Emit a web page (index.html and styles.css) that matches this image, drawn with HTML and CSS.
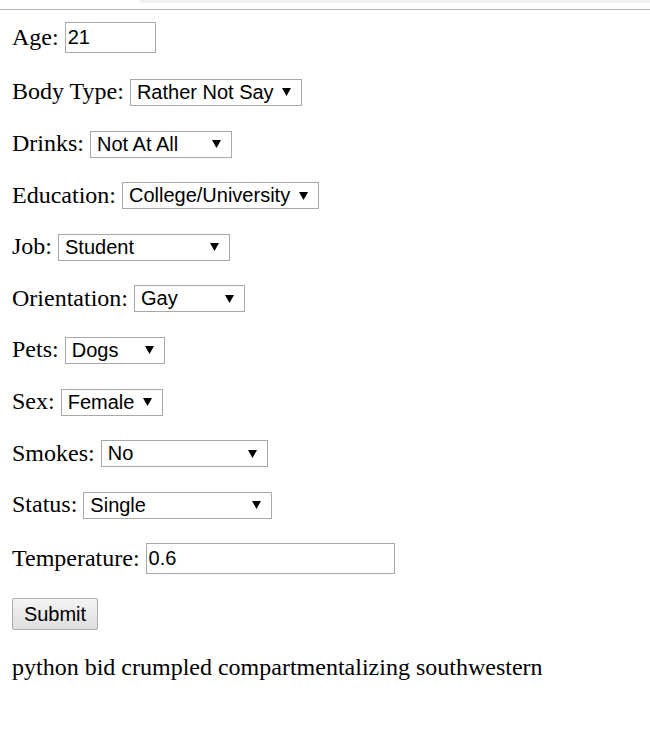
FILE: index.html
```html
<!DOCTYPE html>
<html lang="en">
<head>
<meta charset="utf-8">
<title>Form</title>
<link rel="stylesheet" href="styles.css">
</head>
<body>
<div class="chrome"><div class="chrome-tab"></div></div>
<form class="form">
  <div class="row row-input row-age"><label>Age:</label><input class="text-input age" type="text" value="21"></div>
  <div class="row"><label>Body Type:</label><select class="sel w-body"><option>Rather Not Say</option></select></div>
  <div class="row"><label>Drinks:</label><select class="sel w-drinks"><option>Not At All</option></select></div>
  <div class="row"><label>Education:</label><select class="sel w-edu"><option>College/University</option></select></div>
  <div class="row"><label>Job:</label><select class="sel w-job"><option>Student</option></select></div>
  <div class="row"><label>Orientation:</label><select class="sel w-orient"><option>Gay</option></select></div>
  <div class="row"><label>Pets:</label><select class="sel w-pets"><option>Dogs</option></select></div>
  <div class="row"><label>Sex:</label><select class="sel w-sex"><option>Female</option></select></div>
  <div class="row"><label>Smokes:</label><select class="sel w-smokes"><option>No</option></select></div>
  <div class="row"><label>Status:</label><select class="sel w-status"><option>Single</option></select></div>
  <div class="row row-input row-temp"><label>Temperature:</label><input class="text-input temp" type="text" value="0.6"></div>
  <div class="row row-submit"><button class="submit" type="button">Submit</button></div>
  <div class="output">python bid crumpled compartmentalizing southwestern</div>
</form>
</body>
</html>
```

FILE: styles.css
```css
html, body {
  margin: 0;
  padding: 0;
  background: #ffffff;
}

body {
  font-family: "Liberation Serif", "Times New Roman", serif;
  font-size: 24px;
  color: #000;
}

.chrome {
  height: 9px;
  border-bottom: 1px solid #b9b9b9;
  display: flex;
}

.chrome-tab {
  margin-left: 140px;
  flex: 1;
  height: 3px;
  background: #f1f1f1;
  border-bottom-left-radius: 8px;
}

.form {
  display: flex;
  flex-direction: column;
  align-items: flex-start;
  gap: 24.6px;
  padding: 12px 12px 0 12px;
}

.row {
  display: flex;
  align-items: center;
  gap: 6px;
  height: 27px;
}

.row label {
  line-height: 27px;
  margin-bottom: 1px;
}

.row-input {
  height: 31px;
}

.row-input label {
  margin-bottom: 0;
}

.row-age {
  margin-bottom: 1.4px;
}

.text-input {
  box-sizing: border-box;
  height: 31px;
  margin: 0;
  padding: 0 2px;
  border: 1px solid #a9a9a9;
  font-family: "Liberation Sans", Arial, sans-serif;
  font-size: 20px;
  color: #000;
  background: #fff;
  outline: none;
}

.age { width: 91px; }
.temp { width: 249px; }

.sel {
  -webkit-appearance: none;
  appearance: none;
  box-sizing: border-box;
  height: 27px;
  margin: 0;
  padding: 0 0 1px 6px;
  border: 1px solid #a9a9a9;
  border-radius: 0;
  background-color: #fff;
  background-image: url("data:image/svg+xml,%3Csvg xmlns='http://www.w3.org/2000/svg' width='9' height='8'%3E%3Cpath d='M0 0H9L4.5 8Z' fill='%23000'/%3E%3C/svg%3E");
  background-repeat: no-repeat;
  background-position: right 10px center;
  font-family: "Liberation Sans", Arial, sans-serif;
  font-size: 20px;
  color: #000;
  outline: none;
}

.w-body { width: 172px; }
.w-drinks { width: 142px; }
.w-edu { width: 197px; }
.w-job { width: 172px; }
.w-orient { width: 111px; }
.w-pets { width: 100px; }
.w-sex { width: 102px; }
.w-smokes { width: 167px; }
.w-status { width: 189px; }

.row-temp {
  margin-top: -0.6px;
}

.row-submit {
  height: 32px;
}

.submit {
  box-sizing: border-box;
  width: 86px;
  height: 32px;
  margin: 0;
  padding: 0;
  border: 1px solid #acacac;
  border-radius: 2px;
  background: linear-gradient(#f4f4f4, #dedede);
  font-family: "Liberation Sans", Arial, sans-serif;
  font-size: 20px;
  color: #000;
}

.output {
  line-height: 27px;
  margin-top: -1px;
}
```
